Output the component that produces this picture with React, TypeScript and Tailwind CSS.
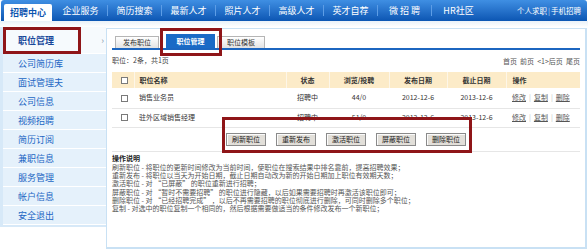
// Recruiter back office: "职位管理" page, with the three red annotation frames.

const navItems = ['企业服务', '简历搜索', '最新人才', '照片人才', '高级人才', '英才自荐', '微 招 聘', 'HR社区'];

const sideItems = ['公司简历库', '面试管理夫', '公司信息', '视频招聘', '简历订阅', '兼职信息', '服务管理', '帐户信息', '安全退出'];

const jobs = [
  { name: '销售业务员', status: '招聘中', views: '44/0', start: '2012-12-6', end: '2013-12-6' },
  { name: '驻外区域销售经理', status: '招聘中', views: '51/0', start: '2012-12-6', end: '2013-12-6' },
];

const actions = ['刷新职位', '重新发布', '激活职位', '屏蔽职位', '删除职位'];

const notes = [
  '刷新职位 - 将职位的更新时间修改为当前时间，使职位在搜索结果中排名靠前，提高招聘效果；',
  '重新发布 - 将职位以当天为开始日期，截止日期自动改为新的开始日期加上职位有效期天数；',
  '激活职位 - 对 “已屏蔽” 的职位重新进行招聘；',
  '屏蔽职位 - 对 “暂时不需要招聘” 的职位进行隐藏，以后如果需要招聘时再激活该职位即可；',
  '删除职位 - 对 “已经招聘完成” ，以后不再需要招聘的职位彻底进行删除，可同时删除多个职位；',
  '复制 - 对选中的职位复制一个相同的，然后根据需要做适当的条件修改发布一个新职位；',
];

function Box() {
  return <span className="inline-block w-[7px] h-[7px] border border-[#7a7a7a] bg-white align-middle" />;
}

export default function App() {
  return (
    <div className="relative w-[588px] h-[251px] overflow-hidden bg-white font-['Noto_Sans_CJK_SC',sans-serif]">
      {/* ── Top nav ── */}
      <div className="mx-[1px] h-[21px] flex items-end rounded-t-[3px] bg-gradient-to-b from-[#3f8fe3] to-[#0b56b3]">
        <div className="ml-[3px] w-[48px] h-[17px] rounded-t-[2px] bg-white flex items-center justify-center text-[9px] leading-none font-bold text-[#0d55b0]">
          招聘中心
        </div>
        <div className="flex items-center h-full pl-[2px]">
          {navItems.map((n, i) => (
            <div key={n} className="flex items-center h-full">
              <span className="w-[53px] text-center text-[9px] leading-none text-white">{n}</span>
              {i < navItems.length - 1 && <span className="w-px h-[11px] bg-[#5d9de6]" />}
            </div>
          ))}
        </div>
        <div className="ml-auto mr-[6px] h-full flex items-center text-[7.5px] leading-none text-white">
          个人求职<span className="mx-[1px] text-[#bcd7f5]">|</span>手机招聘
        </div>
      </div>
      <div className="h-[6px] bg-gradient-to-b from-[#e9f1f8] to-white" />

      {/* ── Body ── */}
      <div className="flex">
        {/* Sidebar */}
        <div className="w-[106px] pl-[3px] bg-[#d7e9f8] pb-[2px] self-start">
          <div className="h-[27px] flex items-center bg-[#f6fafd] border-b border-white pl-[15px] pr-[2px]">
            <span className="text-[9px] leading-none font-bold text-[#17489a]">职位管理</span>
            <span className="ml-auto text-[9px] leading-none text-[#8a9bb0]">›</span>
          </div>
          {sideItems.map((s) => (
            <div key={s} className="h-[19px] flex items-center pl-[15px] bg-[#e5f1fb] border-b border-white text-[9px] leading-none text-[#2266c4]">
              {s}
            </div>
          ))}
        </div>

        {/* Main panel */}
        <div className="mt-[1px] w-[481px] h-[221px] border-t border-l border-r-2 border-b-2 border-[#c9e1f4] pl-[5px] pt-[5px]">
          {/* Tabs */}
          <div className="w-[468px] h-[16px] flex items-end border-b-2 border-[#1c66c0]">
            <div className="ml-[3px] w-[44px] h-[12px] flex items-center justify-center border border-b-0 border-[#b5b5b5] bg-gradient-to-b from-white to-[#e3e3e3] text-[7px] leading-none text-[#333]">
              发布职位
            </div>
            <div className="ml-[7px] w-[49px] h-[14px] flex items-center justify-center bg-[#1a6ac6] text-[7px] leading-none font-bold text-white">
              职位管理
            </div>
            <div className="ml-[2px] w-[48px] h-[12px] flex items-center justify-center border border-b-0 border-[#b5b5b5] bg-gradient-to-b from-white to-[#e3e3e3] text-[7px] leading-none text-[#333]">
              职位模板
            </div>
          </div>

          {/* Count + paging */}
          <div className="w-[468px] mt-[3px] h-[15px] flex items-center justify-between text-[7px] leading-none text-[#444]">
            <span>职位：2条，共1页</span>
            <span className="pt-[1px] text-[#555]">首页&nbsp;&nbsp;前页&nbsp;&nbsp;&lt;1&gt;后页&nbsp;&nbsp;尾页</span>
          </div>

          {/* Table */}
          <table className="mt-[4px] w-[468px] table-fixed border-collapse text-[7px] leading-none text-[#333]">
            <colgroup>
              <col className="w-[22px]" />
              <col className="w-[152px]" />
              <col className="w-[43px]" />
              <col className="w-[60px]" />
              <col className="w-[58px]" />
              <col className="w-[59px]" />
              <col className="w-[74px]" />
            </colgroup>
            <thead>
              <tr className="h-[16px] bg-[#fcebc8] font-bold">
                <th className="pl-[9px] text-left border-r border-[#fdf6e8]"><Box /></th>
                <th className="pl-[5px] text-left border-r border-[#fdf6e8]">职位名称</th>
                <th className="text-center border-r border-[#fdf6e8]">状态</th>
                <th className="text-center border-r border-[#fdf6e8]">浏览/投聘</th>
                <th className="text-center border-r border-[#fdf6e8]">发布日期</th>
                <th className="text-center border-r border-[#fdf6e8]">截止日期</th>
                <th className="pl-[6px] text-left">操作</th>
              </tr>
            </thead>
            <tbody>
              {jobs.map((j, i) => (
                <tr key={j.name} className={`${i === 0 ? 'h-[20px]' : 'h-[19px]'} border-b border-[#e6e6e6]`}>
                  <td className="pl-[9px]"><Box /></td>
                  <td className="pl-[5px]">{j.name}</td>
                  <td className="text-center">{j.status}</td>
                  <td className="text-center">{j.views}</td>
                  <td className="text-center">{j.start}</td>
                  <td className="text-center">{j.end}</td>
                  <td className="pl-[6px] text-[#555]">
                    <span className="underline">修改</span>
                    <span className="mx-[3px] text-[#bbb]">|</span>
                    <span className="underline">复制</span>
                    <span className="mx-[3px] text-[#bbb]">|</span>
                    <span className="underline">删除</span>
                  </td>
                </tr>
              ))}
              <tr className="h-[24px] border-b border-[#e6e6e6]">
                <td colSpan={7}>
                  <div className="flex justify-center gap-[10px]">
                    {actions.map((a) => (
                      <button
                        key={a}
                        type="button"
                        className="h-[13px] px-[5px] border border-[#8a8a8a] bg-[#e2dfd9] shadow-[inset_1px_1px_0_#fbfbfb] text-[7px] leading-none text-[#222]"
                      >
                        {a}
                      </button>
                    ))}
                  </div>
                </td>
              </tr>
            </tbody>
          </table>

          {/* Help text */}
          <div className="mt-[2px] text-[7px] leading-[8.3px] text-[#555]">
            <div className="font-bold text-[#222] mb-[1px]">操作说明</div>
            {notes.map((n) => (
              <div key={n}>{n}</div>
            ))}
          </div>
        </div>
      </div>

      {/* ── Red annotation frames ── */}
      <div className="absolute left-[3px] top-[27px] w-[78px] h-[27px] border-[3px] border-[#8f1518]" />
      <div className="absolute left-[160px] top-[28px] w-[62px] h-[28px] border-[3px] border-[#8f1518]" />
      <div className="absolute left-[222px] top-[117px] w-[250px] h-[36px] border-[3px] border-[#8f1518]" />
    </div>
  );
}
